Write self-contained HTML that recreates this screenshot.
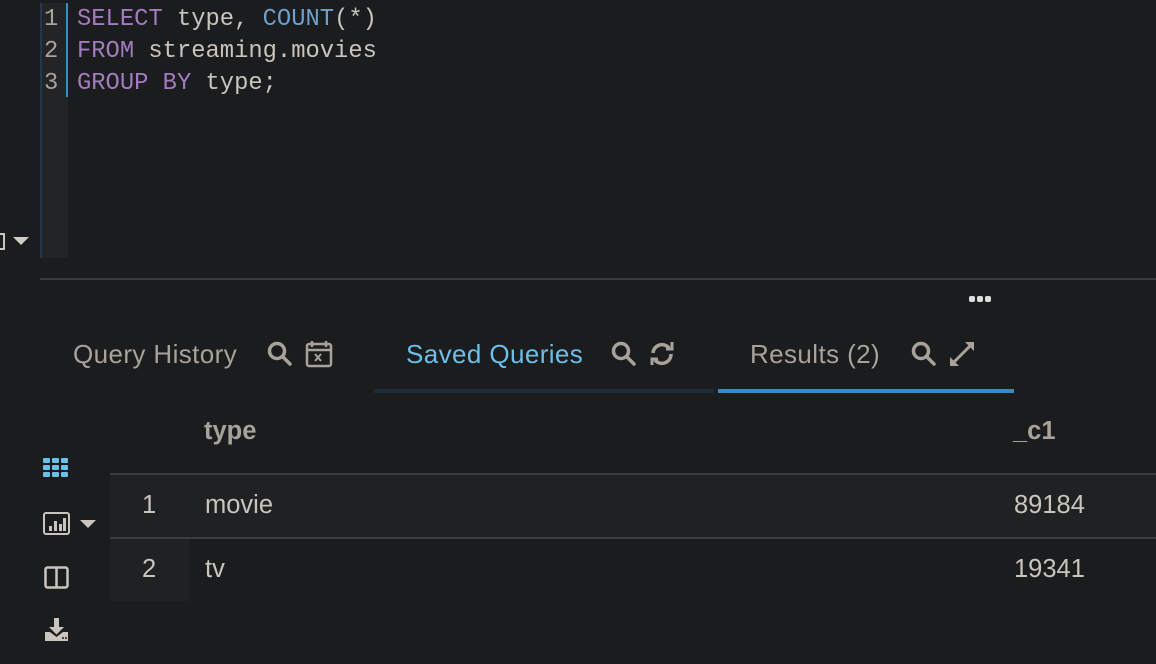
<!DOCTYPE html>
<html><head><style>
body{margin:0;width:1156px;height:664px;background:#1b1c1e;overflow:hidden;position:relative;font-family:"Liberation Sans",sans-serif;}
.a{position:absolute}
.code{font-family:"Liberation Mono",monospace;font-size:23.8px;color:#c9c4bd;white-space:pre;line-height:32px}
.k{color:#a27cbf}.f{color:#6f9fcb}
.tab{font-size:26px;letter-spacing:0.4px;color:#a8a29b}
.c{font-size:25.5px;color:#c9c4bd}
</style></head><body>
<div class="a" style="left:40px;top:3px;width:28px;height:255px;background:#232426;border-left:2px solid #24384d;box-sizing:border-box"></div>
<div class="a" style="left:66px;top:3px;width:2px;height:94px;background:#3a8ac4"></div>
<div class="a code" style="left:44px;top:4px;color:#a8a29b">1
2
3</div>
<div class="a code" style="left:77px;top:4px"><span class="k">SELECT</span> type, <span class="f">COUNT</span>(*)
<span class="k">FROM</span> streaming.movies
<span class="k">GROUP BY</span> type;</div>
<div class="a" style="left:0;top:233px;width:5px;height:17px;border:2px solid #c9c4bd;border-left:none;box-sizing:border-box"></div>
<div class="a" style="left:13px;top:237px;width:0;height:0;border-left:8px solid transparent;border-right:8px solid transparent;border-top:8px solid #d0cbc4"></div>
<div class="a" style="left:40px;top:278px;width:1116px;height:2px;background:#3a3b3d"></div>
<div class="a" style="left:969px;top:296px;font-size:0">
<span style="display:inline-block;width:6px;height:6px;border-radius:2px;background:#ddd;margin-right:2px"></span><span style="display:inline-block;width:6px;height:6px;border-radius:2px;background:#ddd;margin-right:2px"></span><span style="display:inline-block;width:6px;height:6px;border-radius:2px;background:#ddd"></span></div>
<div class="a tab" style="left:73px;top:339px">Query History</div>
<div class="a tab" style="left:406px;top:339px;color:#6cbfe8">Saved Queries</div>
<div class="a tab" style="left:750px;top:339px">Results (2)</div>
<svg class="a" style="left:266px;top:340px" width="70" height="28" viewBox="0 0 70 28" fill="none" stroke="#a8a29b" stroke-width="3.5"><circle cx="11" cy="11" r="7.5"/><path d="M17 17l7 7" stroke-linecap="round"/><rect x="41" y="4" width="24" height="22" rx="2" stroke-width="2.5"/><path d="M41 10h24M46 1v6M60 1v6" stroke-width="2.5"/><path d="M49 14l6 7M55 14l-6 7" stroke-width="2"/></svg>
<svg class="a" style="left:610px;top:340px" width="70" height="28" viewBox="0 0 70 28" fill="none" stroke="#a8a29b" stroke-width="3.5"><circle cx="11" cy="11" r="7.5"/><path d="M17 17l7 7" stroke-linecap="round"/><path d="M43 13a9 9 0 0 1 16-5M61 14a9 9 0 0 1-16 6"/><path d="M56 9h6V2M48 19h-6v6" stroke-width="3"/></svg>
<svg class="a" style="left:910px;top:340px" width="70" height="28" viewBox="0 0 70 28" fill="none" stroke="#a8a29b" stroke-width="3.5"><circle cx="11" cy="11" r="7.5"/><path d="M17 17l7 7" stroke-linecap="round"/><path d="M42 24l20-20" stroke-width="3"/><path d="M55 2h9v9z M40 17v9h9z" fill="#a8a29b" stroke="none"/></svg>
<div class="a" style="left:374px;top:389px;width:340px;height:4px;background:#1e2c3a"></div>
<div class="a" style="left:718px;top:389px;width:296px;height:4px;background:#3a8ac4"></div>
<div class="a" style="left:204px;top:417px;font-size:25.5px;font-weight:bold;color:#a8a29b">type</div>
<div class="a" style="left:1013px;top:417px;font-size:25.5px;font-weight:bold;color:#a8a29b">_c1</div>
<div class="a" style="left:110px;top:473px;width:1046px;height:2px;background:#3b3c3e"></div>
<div class="a" style="left:110px;top:475px;width:1046px;height:62px;background:#202123"></div>
<div class="a" style="left:110px;top:537px;width:1046px;height:2px;background:#3b3c3e"></div>
<div class="a" style="left:110px;top:539px;width:79px;height:62px;background:#202123"></div>
<div class="a c" style="left:142px;top:491px">1</div>
<div class="a c" style="left:205px;top:491px">movie</div>
<div class="a c" style="left:1014px;top:491px">89184</div>
<div class="a c" style="left:142px;top:555px">2</div>
<div class="a c" style="left:205px;top:555px">tv</div>
<div class="a c" style="left:1014px;top:555px">19341</div>
<svg class="a" style="left:43px;top:457px" width="28" height="24"><g fill="#6cbfe8"><rect x="0" y="1" width="7" height="5" rx="1"/><rect x="9" y="1" width="7" height="5" rx="1"/><rect x="18" y="1" width="7" height="5" rx="1"/><rect x="0" y="8" width="7" height="5" rx="1"/><rect x="9" y="8" width="7" height="5" rx="1"/><rect x="18" y="8" width="7" height="5" rx="1"/><rect x="0" y="15" width="7" height="5" rx="1"/><rect x="9" y="15" width="7" height="5" rx="1"/><rect x="18" y="15" width="7" height="5" rx="1"/></g></svg>
<svg class="a" style="left:42px;top:511px" width="58" height="26"><rect x="2" y="2" width="25" height="21" rx="2" fill="none" stroke="#c9c4bd" stroke-width="2"/><g fill="#c9c4bd"><rect x="7" y="15" width="3" height="5"/><rect x="12" y="10" width="3" height="10"/><rect x="17" y="13" width="3" height="7"/><rect x="21" y="7" width="3" height="13"/></g><path d="M38 9h16l-8 8z" fill="#c9c4bd"/></svg>
<svg class="a" style="left:44px;top:566px" width="26" height="24"><rect x="1.5" y="1.5" width="22" height="20" rx="2" fill="none" stroke="#c9c4bd" stroke-width="2.5"/><path d="M12.5 2v19" stroke="#c9c4bd" stroke-width="2.5"/></svg>
<svg class="a" style="left:44px;top:617px" width="26" height="26"><path d="M10 1h5v9h5l-7.5 7.5L5 10h5z" fill="#c9c4bd"/><path d="M1 15h5l6.5 5 6.5-5h5v9H1z" fill="#c9c4bd"/><circle cx="19" cy="21" r="1" fill="#1b1c1e"/><circle cx="22" cy="21" r="1" fill="#1b1c1e"/></svg>
</body></html>
